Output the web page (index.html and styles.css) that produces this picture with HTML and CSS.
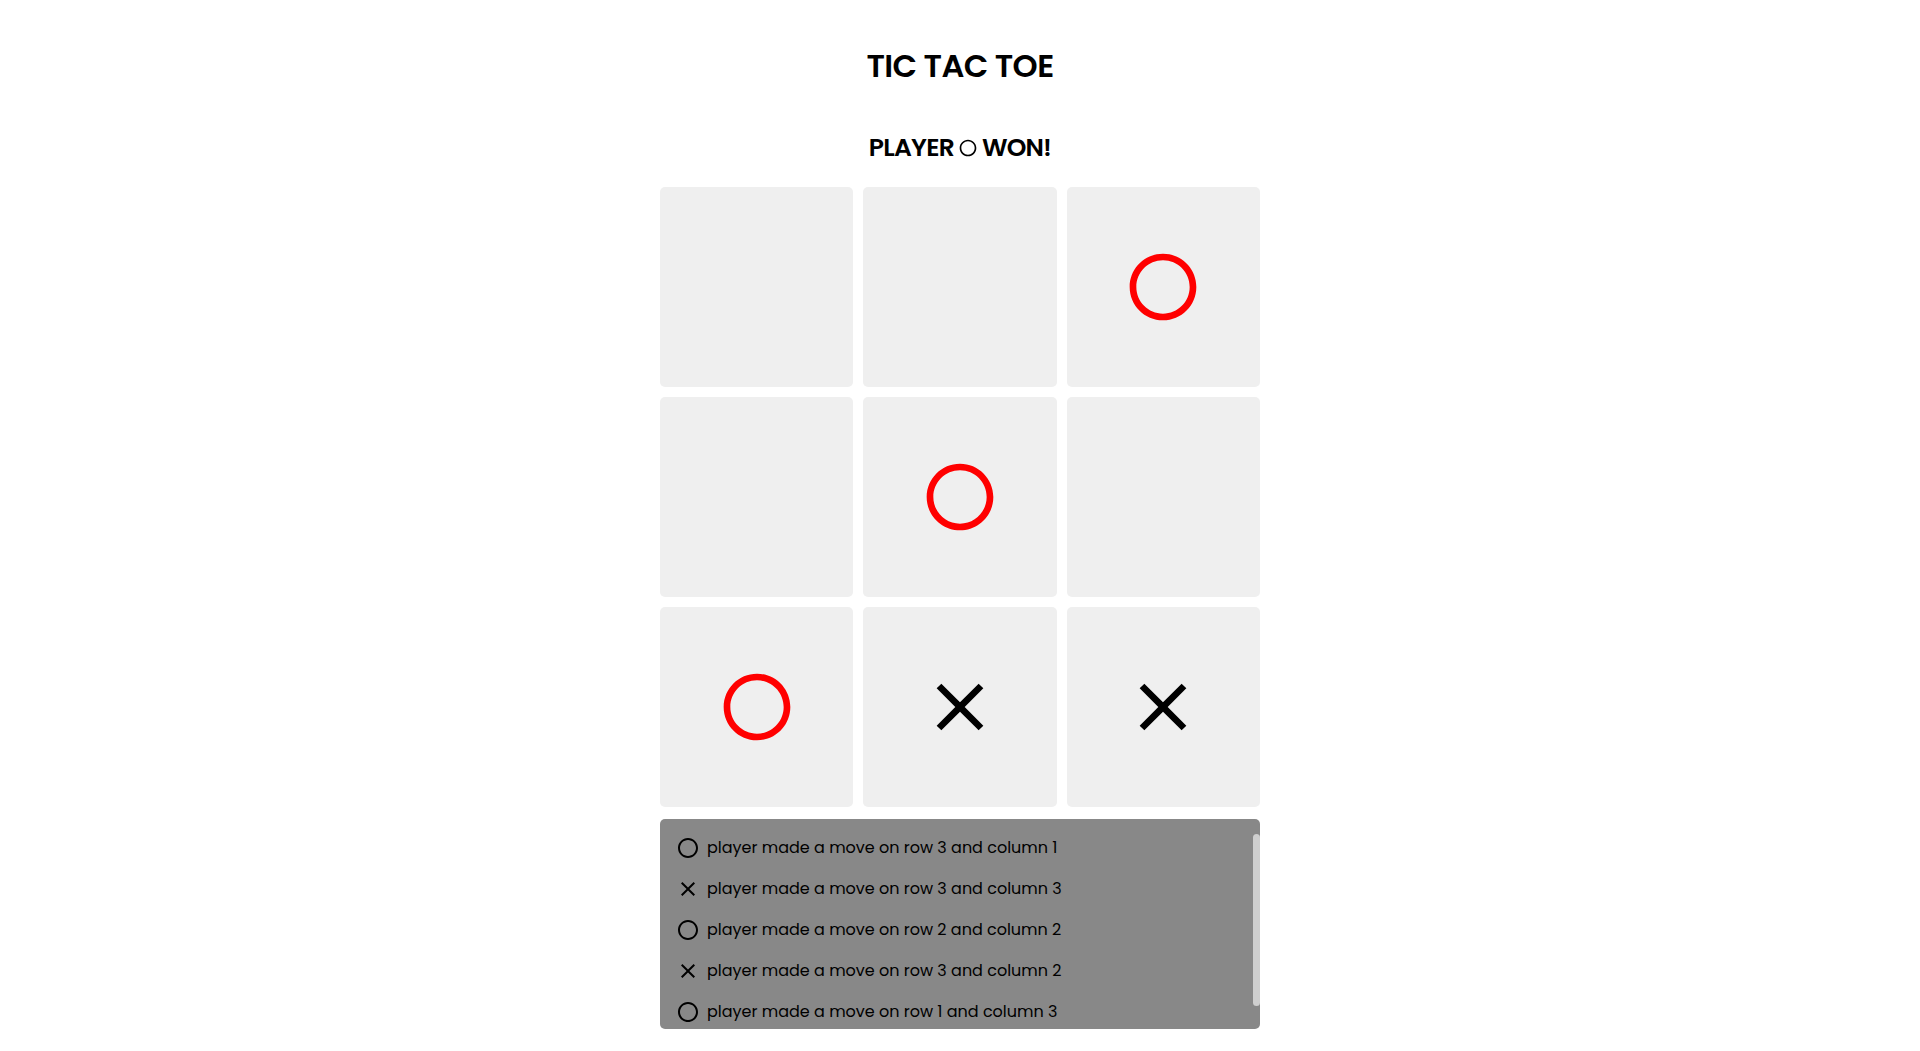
FILE: index.html
```html
<!DOCTYPE html>
<html lang="en">
<head>
<meta charset="utf-8">
<title>Tic Tac Toe</title>
<link rel="stylesheet" href="styles.css">
</head>
<body>
<svg class="defs" width="0" height="0" aria-hidden="true">
  <symbol id="i-o" viewBox="0 0 24 24"><path d="M12 2C6.48 2 2 6.48 2 12s4.48 10 10 10 10-4.48 10-10S17.52 2 12 2zm0 18c-4.42 0-8-3.58-8-8s3.58-8 8-8 8 3.58 8 8-3.58 8-8 8z"/></symbol>
  <symbol id="i-x" viewBox="0 0 24 24"><path d="M19 6.41L17.59 5 12 10.59 6.41 5 5 6.41 10.59 12 5 17.59 6.41 19 12 13.41 17.59 19 19 17.59 13.41 12z"/></symbol>
</svg>
<main class="app">
  <h1 class="title">TIC TAC TOE</h1>
  <h2 class="status">PLAYER <svg class="status-icon"><use href="#i-o"/></svg> WON!</h2>
  <div class="board">
    <button class="cell"></button>
    <button class="cell"></button>
    <button class="cell"><svg class="mark mark-o"><use href="#i-o"/></svg></button>
    <button class="cell"></button>
    <button class="cell"><svg class="mark mark-o"><use href="#i-o"/></svg></button>
    <button class="cell"></button>
    <button class="cell"><svg class="mark mark-o"><use href="#i-o"/></svg></button>
    <button class="cell"><svg class="mark mark-x"><use href="#i-x"/></svg></button>
    <button class="cell"><svg class="mark mark-x"><use href="#i-x"/></svg></button>
  </div>
  <div class="log">
    <ul class="log-list">
      <li class="log-item"><svg class="log-icon"><use href="#i-o"/></svg><span>player made a move on row 3 and column 1</span></li>
      <li class="log-item"><svg class="log-icon"><use href="#i-x"/></svg><span>player made a move on row 3 and column 3</span></li>
      <li class="log-item"><svg class="log-icon"><use href="#i-o"/></svg><span>player made a move on row 2 and column 2</span></li>
      <li class="log-item"><svg class="log-icon"><use href="#i-x"/></svg><span>player made a move on row 3 and column 2</span></li>
      <li class="log-item"><svg class="log-icon"><use href="#i-o"/></svg><span>player made a move on row 1 and column 3</span></li>
    </ul>
    <div class="log-thumb"></div>
  </div>
</main>
</body>
</html>
```
FILE: styles.css
```css
* { box-sizing: border-box; }
html, body { margin: 0; padding: 0; background: #fff; }
body {
  font-family: Poppins, "Open Sans", "Noto Sans", sans-serif;
  color: #000;
}
.defs { position: absolute; width: 0; height: 0; overflow: hidden; }
.app {
  width: 600px;
  margin: 0 auto;
  display: flex;
  flex-direction: column;
  align-items: center;
}
.title {
  margin: 46px 0 0;
  font-size: 32px;
  line-height: 40px;
  font-weight: 600;
  letter-spacing: -0.6px;
}
.status {
  margin: 45px 0 0;
  font-size: 25px;
  line-height: 34px;
  font-weight: 600;
  letter-spacing: -0.8px;
  display: flex;
  align-items: center;
  gap: 4px;
}
.status-icon { width: 20px; height: 20px; fill: #000; }
.board {
  margin-top: 22px;
  width: 600px;
  display: grid;
  grid-template-columns: repeat(3, 1fr);
  grid-auto-rows: 200px;
  gap: 10px;
}
.cell {
  border: 0;
  padding: 0;
  margin: 0;
  background: #efefef;
  border-radius: 5px;
  display: flex;
  align-items: center;
  justify-content: center;
}
.mark { width: 80px; height: 80px; }
.mark-o { fill: #ff0000; }
.mark-x { fill: #000; }
.log {
  position: relative;
  margin-top: 12px;
  width: 600px;
  height: 210px;
  background: #888;
  border-radius: 5px;
  overflow: hidden;
}
.log-list {
  list-style: none;
  margin: 0;
  padding: 8px 0 7px 16px;
}
.log-thumb {
  position: absolute;
  top: 15px;
  right: 0;
  width: 7px;
  height: 172px;
  background: #cfcfcf;
  border-radius: 4px;
}
.log-item {
  height: 41px;
  display: flex;
  align-items: center;
  gap: 7px;
  font-size: 16px;
}
.log-icon { width: 24px; height: 24px; fill: #000; flex: none; }
```
